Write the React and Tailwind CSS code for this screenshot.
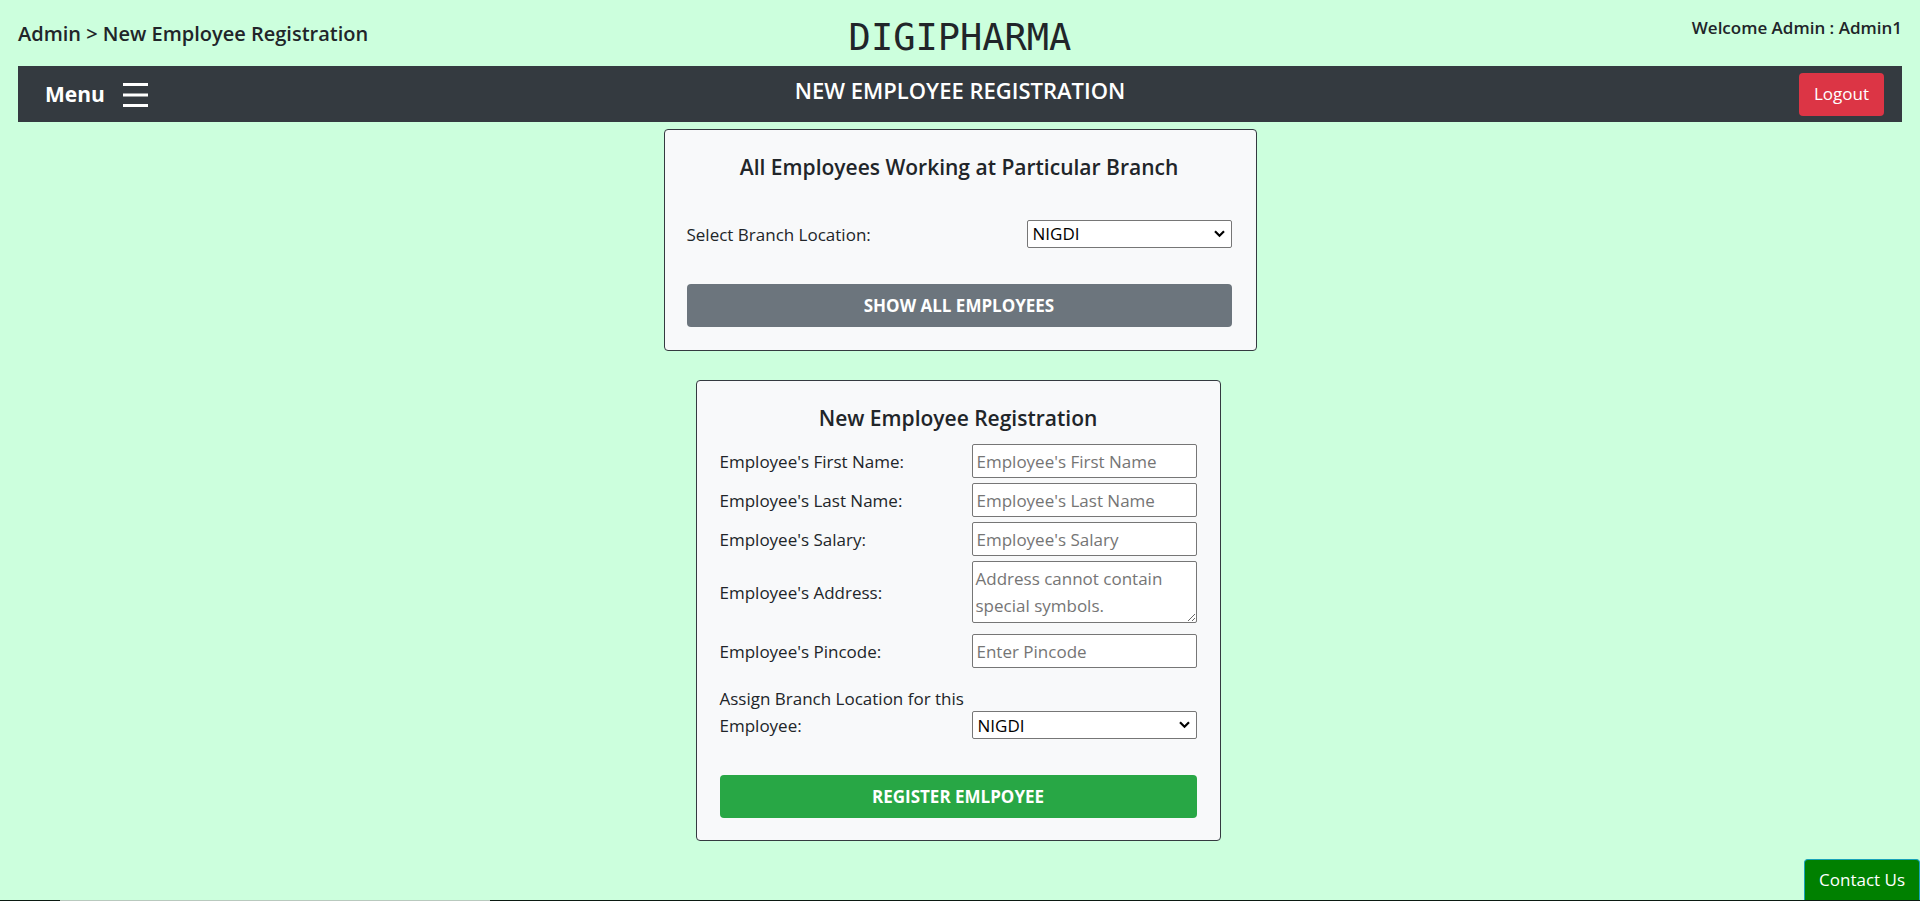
const control =
  "w-full rounded-xs border border-[#767676] bg-white text-[17px] placeholder:text-[#757575]";

const textFields = [
  { id: "first-name", label: "Employee's First Name:", placeholder: "Employee's First Name" },
  { id: "last-name", label: "Employee's Last Name:", placeholder: "Employee's Last Name" },
  { id: "salary", label: "Employee's Salary:", placeholder: "Employee's Salary" },
];

function BranchSelect({ id }) {
  return (
    <div className="relative flex">
      <select id={id} className={`${control} h-7 appearance-none pr-6 pl-[5px] text-black`}>
        <option>NIGDI</option>
      </select>
      <svg
        width="11"
        height="8"
        viewBox="0 0 11 8"
        fill="none"
        stroke="black"
        strokeWidth="2.2"
        className="pointer-events-none absolute top-2.5 right-[7px]"
        aria-hidden="true"
      >
        <path d="M1 1.2 5.5 5.7 10 1.2" />
      </svg>
    </div>
  );
}

function Header() {
  return (
    <header className="grid h-[66px] grid-cols-3 px-[18px]">
      <nav aria-label="Breadcrumb" className="pt-5 text-[20px] leading-[27px] font-semibold">
        <a href="#admin">Admin</a> &gt; New Employee Registration
      </nav>
      <div className="pt-4 text-center font-['Comic_Sans_MS','DejaVu_Sans_Mono',monospace] text-[37px] leading-[43px]">
        DIGIPHARMA
      </div>
      <p className="pt-3.5 text-right text-[17px] leading-[27px] font-semibold">Welcome Admin : Admin1</p>
    </header>
  );
}

function NavBar() {
  return (
    <div className="mx-[18px] grid h-14 grid-cols-3 bg-[#343a40] text-white">
      <button type="button" className="flex items-center gap-[18px] pt-0.5 pl-[27px] text-[21px] font-bold">
        Menu
        <svg width="25" height="24" viewBox="0 0 25 24" fill="currentColor" aria-hidden="true">
          <rect width="25" height="3" />
          <rect y="10.5" width="25" height="3" />
          <rect y="21" width="25" height="3" />
        </svg>
      </button>
      <h1 className="pt-[11px] text-center text-[22px] leading-[27px] font-semibold">NEW EMPLOYEE REGISTRATION</h1>
      <div className="flex items-center justify-end pr-[18px]">
        <button type="button" className="h-[43px] rounded bg-[#dc3545] px-[15px] text-[17px]">
          Logout
        </button>
      </div>
    </div>
  );
}

export default function App() {
  return (
    <div className="flex min-h-screen flex-col bg-[#ccffdd] font-['Open_Sans',sans-serif] text-[#212529]">
      <Header />
      <NavBar />
      <main className="flex flex-col items-center gap-[29px] pt-[7px]">
        <form className="w-full max-w-[593px] rounded border border-[#343a40] bg-[#f8f9fa] pt-6 pr-6 pb-[23px] pl-[22px]">
          <h2 className="text-center text-[21px] leading-[27px] font-semibold">
            All Employees Working at Particular Branch
          </h2>
          <div className="mt-[39px] grid grid-cols-[1fr_205px] items-center">
            <label htmlFor="branch" className="text-[17px] leading-[27px]">
              Select Branch Location:
            </label>
            <BranchSelect id="branch" />
          </div>
          <button type="button" className="mt-9 h-[43px] w-full rounded bg-[#6c757d] text-[17px] font-bold text-white">
            SHOW ALL EMPLOYEES
          </button>
        </form>

        <form className="mr-1 w-full max-w-[525px] rounded border border-[#343a40] bg-[#f8f9fa] px-[23px] pt-6 pb-[22px]">
          <h2 className="text-center text-[21px] leading-[27px] font-semibold">New Employee Registration</h2>
          <div className="mt-3 grid grid-cols-[1fr_225px] items-center gap-y-[5px] text-[17px] leading-[27px]">
            {textFields.map((field) => (
              <div key={field.id} className="contents">
                <label htmlFor={field.id}>{field.label}</label>
                <input id={field.id} type="text" placeholder={field.placeholder} className={`${control} h-[34px] px-1`} />
              </div>
            ))}
            <label htmlFor="address">Employee's Address:</label>
            <textarea
              id="address"
              rows={2}
              placeholder="Address cannot contain special symbols."
              className={`${control} h-[62px] px-[3px] py-[3px] leading-[27px]`}
            />
          </div>
          <div className="mt-[11px] grid grid-cols-[1fr_225px] items-end gap-y-[17px] text-[17px] leading-[27px]">
            <label htmlFor="pincode" className="self-center">
              Employee's Pincode:
            </label>
            <input id="pincode" type="text" placeholder="Enter Pincode" className={`${control} h-[34px] px-1`} />
            <label htmlFor="assign-branch">Assign Branch Location for this Employee:</label>
            <BranchSelect id="assign-branch" />
          </div>
          <button type="button" className="mt-9 h-[43px] w-full rounded bg-[#28a745] text-[17px] font-bold text-white">
            REGISTER EMLPOYEE
          </button>
        </form>
      </main>
      <footer className="mt-auto flex flex-col items-end">
        <button
          type="button"
          className="h-[41px] rounded-t border border-b-0 border-[#17a2b8] bg-[#008000] px-3.5 text-[17px] text-white"
        >
          Contact Us
        </button>
        <div className="h-px w-full bg-[#0b1a12] pl-[60px]">
          <div className="h-px w-[430px] bg-[#b9c9be]" />
        </div>
      </footer>
    </div>
  );
}
